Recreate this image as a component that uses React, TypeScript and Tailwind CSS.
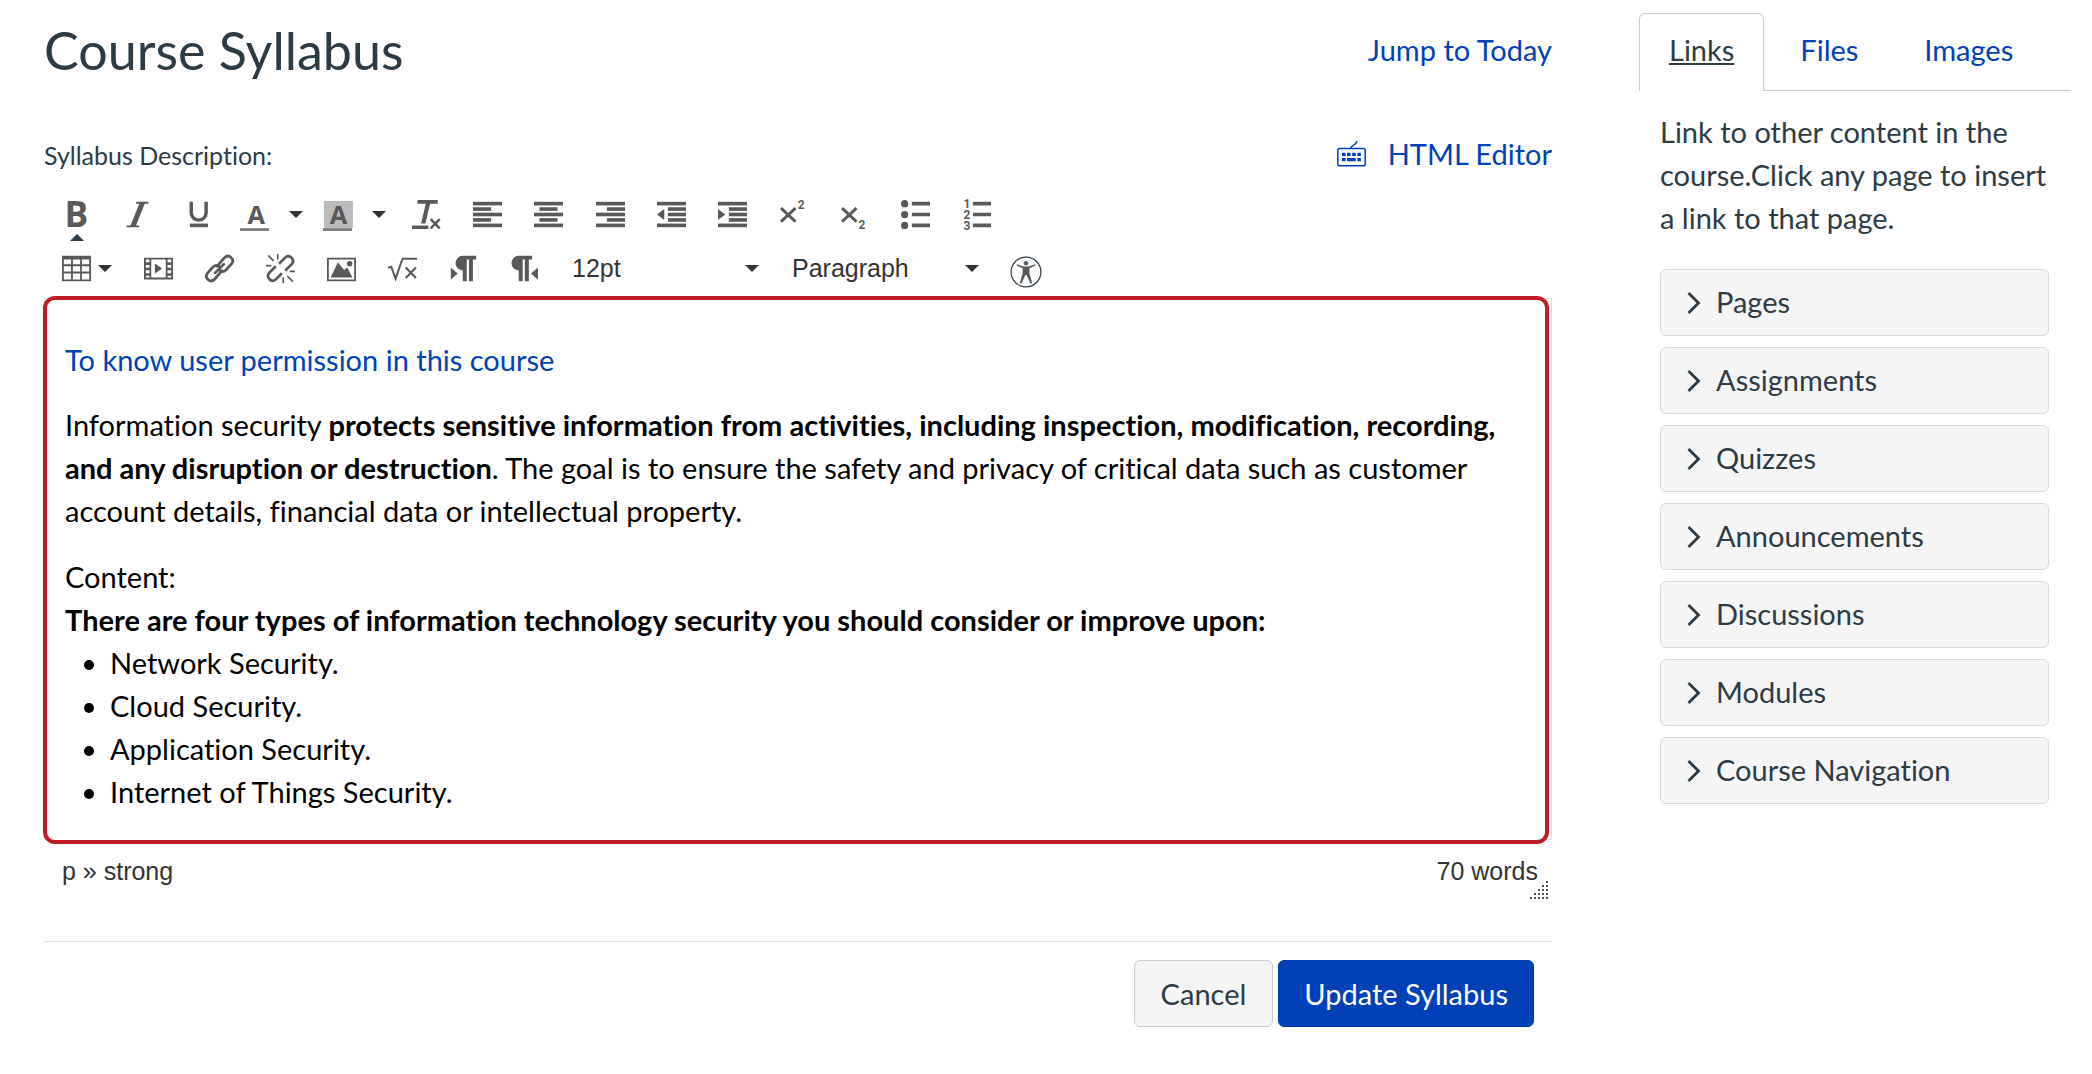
import React from 'react';
import type { ReactNode } from 'react';

const Icon = ({ children }: { children: ReactNode }) => (
  <svg width="29" height="29" viewBox="0 0 16 16" fill="currentColor" className="shrink-0 overflow-visible" aria-hidden="true">
    {children}
  </svg>
);

const Caret = ({ className = '' }: { className?: string }) => (
  <svg width="14" height="7" viewBox="0 0 14 7" className={`pointer-events-none shrink-0 text-[#333333] ${className}`} aria-hidden="true">
    <path d="M0 0h14L7 7z" fill="currentColor" />
  </svg>
);

const Tool = ({ label, children }: { label: string; children: ReactNode }) => (
  <button type="button" aria-label={label} title={label} className="relative flex h-[54px] w-[61px] shrink-0 items-center justify-center">
    {children}
  </button>
);

const SplitTool = ({ label, children, tight }: { label: string; children: ReactNode; tight?: boolean }) => (
  <button
    type="button"
    aria-label={label}
    title={label}
    className={`flex h-[54px] shrink-0 items-center ${tight ? 'w-[82px] gap-[7px] pl-4' : 'w-[83px] gap-5 pl-[11px]'}`}
  >
    {children}
    <Caret />
  </button>
);

const Group = ({ children }: { children: ReactNode }) => <div className="flex">{children}</div>;

const bars = (rows: [number, number][]) =>
  rows.map(([x, w], i) => <rect key={i} x={x} y={1 + i * 3} width={w} height="2" />);

const ToolSelect = ({ label, value, options }: { label: string; value: string; options: string[] }) => (
  <div className="relative flex h-[54px] w-[220px] shrink-0 items-center">
    <select
      aria-label={label}
      defaultValue={value}
      className="h-full w-full appearance-none bg-transparent px-[17px] font-['Liberation_Sans',sans-serif] text-[25px] text-[#333333]"
    >
      {options.map((o) => (
        <option key={o}>{o}</option>
      ))}
    </select>
    <Caret className="absolute right-4" />
  </div>
);

const linkHalf = 'M6.6 6.8 L10.6 2.2 Q12.4 .2 14.2 1.8 Q16.2 3.6 14.6 5.5 L11.6 8.8 Q9.9 10.4 8.2 9.2';

const sections = ['Pages', 'Assignments', 'Quizzes', 'Announcements', 'Discussions', 'Modules', 'Course Navigation'];
const items = ['Network Security.', 'Cloud Security.', 'Application Security.', 'Internet of Things Security.'];

const Pilcrow = ({ x }: { x: number }) => (
  <path transform={`translate(${x} 0)`} d="M4 1h7.4v2H9.6v12H7.4V3H6.2v12H4V9a4 4 0 0 1 0-8z" />
);

function Toolbar() {
  return (
    <div role="toolbar" aria-label="Formatting" className="flex flex-col pl-[2px] text-[#595959]">
      <div className="flex flex-wrap gap-px">
        <Group>
          <Tool label="Bold">
            <Icon>
              <text x="7.9" y="15" textAnchor="middle" fontFamily="Open Sans" fontWeight="700" fontSize="19.5">B</text>
            </Icon>
            <svg width="14" height="7" viewBox="0 0 14 7" className="absolute bottom-0 text-[#2d3b45]" aria-hidden="true">
              <path d="M0 7h14L7 0z" fill="currentColor" />
            </svg>
          </Tool>
          <Tool label="Italic">
            <Icon>
              <path d="M7.2 1.5H14M2 14.5h7" stroke="currentColor" strokeWidth="1" fill="none" />
              <path d="M9.2 1.5h3L7 14.5H4z" />
            </Icon>
          </Tool>
          <Tool label="Underline">
            <Icon>
              <path d="M4 1v6a4.1 4.1 0 0 0 8.2 0V1" fill="none" stroke="currentColor" strokeWidth="1.9" />
              <rect x="3.2" y="13" width="10" height="2" />
            </Icon>
          </Tool>
          <SplitTool label="Text color">
            <Icon>
              <text x="9" y="13" textAnchor="middle" fontFamily="Open Sans" fontWeight="700" fontSize="14">A</text>
              <rect x="0" y="15.5" width="16" height="1.6" fill="#808080" />
            </Icon>
          </SplitTool>
          <SplitTool label="Background color">
            <Icon>
              <rect x="0.5" y="0.5" width="16" height="15" fill="#bbbbbb" />
              <text x="8.5" y="13" textAnchor="middle" fontFamily="Open Sans" fontWeight="700" fontSize="14">A</text>
              <rect x="0" y="15.5" width="16" height="1.6" fill="#808080" />
            </Icon>
          </SplitTool>
        </Group>
        <Group>
          <Tool label="Clear formatting">
            <Icon>
              <path d="M3 0h11.2v2.1H10L7.4 13H5L7.6 2.1H3zM0 14h9v2H0z" />
              <path d="M10.3 10.6l5 5M15.3 10.6l-5 5" stroke="currentColor" strokeWidth="1.4" />
            </Icon>
          </Tool>
          <Tool label="Align left"><Icon>{bars([[0, 16], [0, 10], [0, 16], [0, 10], [0, 16]])}</Icon></Tool>
          <Tool label="Align center"><Icon>{bars([[0, 16], [3, 10], [0, 16], [3, 10], [0, 16]])}</Icon></Tool>
        </Group>
        <Group>
          <Tool label="Align right"><Icon>{bars([[0, 16], [6, 10], [0, 16], [6, 10], [0, 16]])}</Icon></Tool>
          <Tool label="Decrease indent">
            <Icon>{bars([[0, 16], [6, 10], [6, 10], [6, 10], [0, 16]])}<path d="M4 5v6L0 8z" /></Icon>
          </Tool>
          <Tool label="Increase indent">
            <Icon>{bars([[0, 16], [6, 10], [6, 10], [6, 10], [0, 16]])}<path d="M0 5v6l4-3z" /></Icon>
          </Tool>
          <Tool label="Superscript">
            <Icon>
              <path d="M1.1 4.5l8 7.4M9.1 4.5l-8 7.4" stroke="currentColor" strokeWidth="1.6" />
              <text x="10.4" y="4.8" fontFamily="Roboto" fontWeight="700" fontSize="6.6">2</text>
            </Icon>
          </Tool>
          <Tool label="Subscript">
            <Icon>
              <path d="M1.1 4.5l8 7.4M9.1 4.5l-8 7.4" stroke="currentColor" strokeWidth="1.6" />
              <text x="10.2" y="16" fontFamily="Roboto" fontWeight="700" fontSize="6.6">2</text>
            </Icon>
          </Tool>
          <Tool label="Bulleted list">
            <Icon>
              <circle cx="2" cy="2" r="2" /><circle cx="2" cy="8" r="2" /><circle cx="2" cy="14" r="2" />
              <path d="M6 1h10v2H6zM6 7h10v2H6zM6 13h10v2H6z" />
            </Icon>
          </Tool>
          <Tool label="Numbered list">
            <Icon>
              <g fontFamily="Roboto" fontWeight="700" fontSize="6.6">
                <text x="0.8" y="4.4">1</text><text x="0.8" y="10.4">2</text><text x="0.8" y="16.4">3</text>
              </g>
              <path d="M6 1h10v2H6zM6 7h10v2H6zM6 13h10v2H6z" />
            </Icon>
          </Tool>
        </Group>
      </div>
      <div className="flex flex-wrap">
        <SplitTool label="Table" tight>
          <Icon>
            <path fillRule="evenodd" d="M0 1h16v14H0zM1 3v2.7h4V3zM6 3v2.7h4V3zM11 3v2.7h4V3zM1 6.7v3h4v-3zM6 6.7v3h4v-3zM11 6.7v3h4v-3zM1 10.7V14h4v-3.3zM6 10.7V14h4v-3.3zM11 10.7V14h4v-3.3z" />
          </Icon>
        </SplitTool>
        <Tool label="Media">
          <Icon>
            <path fillRule="evenodd" d="M0 2h16v12H0zM1 3v1.6h2V3zM1 6v1.6h2V6zM1 9v1.6h2V9zM1 12v1h2v-1zM4 3v10h8V3zM13 3v1.6h2V3zM13 6v1.6h2V6zM13 9v1.6h2V9zM13 12v1h2v-1z" />
            <path d="M6 5.2v5.6L10 8z" />
          </Icon>
        </Tool>
        <Tool label="Insert link">
          <Icon>
            <g fill="none" stroke="currentColor" strokeWidth="1.5" strokeLinecap="round">
              <path d={linkHalf} />
              <path d={linkHalf} transform="rotate(180 8 8)" />
              <path d="M5.6 10.4l4.8-4.8" />
            </g>
          </Icon>
        </Tool>
        <Tool label="Remove link">
          <Icon>
            <g fill="none" stroke="currentColor" strokeWidth="1.5">
              <path d="M7.2 5.4l3.4-3.4Q12.2.4 14 2q1.8 1.8.2 3.6L10.6 9.2" />
              <path d="M8.8 10.6l-3.4 3.4Q3.8 15.6 2 14q-1.8-1.8-.2-3.6L5.4 6.8" />
              <path d="M6.5 0v3M1.2.8l3 3M0 6.4h3M9.5 13v3M11.8 12.2l3 3M13 9.6h3" strokeWidth="0.9" />
            </g>
          </Icon>
        </Tool>
        <Tool label="Insert image">
          <Icon>
            <path fillRule="evenodd" d="M0 2h16v13H0zM1 3v11h14V3z" />
            <path d="M2 13l4-8.4 3.4 4.2 1.8-1.4L14 13z" />
            <circle cx="12.5" cy="5.4" r="1.5" />
          </Icon>
        </Tool>
        <Tool label="Insert equation">
          <Icon>
            <path d="M0 7.6l1.8-.6 2.4 6.6L8 2.6h8" fill="none" stroke="currentColor" strokeWidth="1.1" />
            <path d="M9.8 7.4l5.6 5.8M15.4 7.4l-5.6 5.8" stroke="currentColor" strokeWidth="1.2" />
          </Icon>
        </Tool>
        <Tool label="Left to right"><Icon><Pilcrow x={3.6} /><path d="M1 7.4v6.8l3.8-3.4z" /></Icon></Tool>
        <Tool label="Right to left"><Icon><Pilcrow x={0.8} /><path d="M15.4 7.4v6.8l-3.8-3.4z" /></Icon></Tool>
        <ToolSelect label="Font size" value="12pt" options={['8pt', '10pt', '12pt', '14pt', '18pt', '24pt', '36pt']} />
        <ToolSelect label="Block format" value="Paragraph" options={['Paragraph', 'Header 2', 'Header 3', 'Header 4', 'Preformatted']} />
        <button type="button" aria-label="Check accessibility" className="flex h-[54px] w-[61px] items-center justify-center pt-2">
          <svg width="32" height="32" viewBox="0 0 32 32" fill="currentColor" aria-hidden="true">
            <circle cx="16" cy="16" r="14.9" fill="none" stroke="#2d3b45" strokeWidth="1.2" />
            <circle cx="16" cy="7.3" r="2.2" />
            <path d="M7 8.2l6.2 2.2h5.6L25 8.2l.4 1.2-6 2.8v5l2.8 10-1.6.6L16.6 19h-1.2l-4 8.8-1.6-.6 2.8-10v-5l-6-2.8z" />
          </svg>
        </button>
      </div>
    </div>
  );
}

export default function App() {
  return (
    <div className="flex gap-[87px] pr-[21px] pl-11 font-[Lato,sans-serif] text-[29px] leading-[43px] text-[#2d3b45] [font-variant-ligatures:no-common-ligatures]">
      <main className="flex min-w-0 flex-1 flex-col">
        <header className="flex h-[102px] items-start justify-between pt-[11px]">
          <h1 className="text-[52px] leading-[78px]">Course Syllabus</h1>
          <a href="#today" className="pt-[17px] text-[#0041b8]">Jump to Today</a>
        </header>
        <div className="flex h-[85px] items-start justify-between pt-[30px]">
          <span className="pt-[2px] text-[25px]">Syllabus Description:</span>
          <a href="#html" className="flex items-center gap-[22px] text-[#0041b8]">
            <svg width="29" height="26" viewBox="0 0 29 26" fill="none" stroke="currentColor" strokeWidth="1.5" aria-hidden="true">
              <rect x="0.8" y="7.6" width="27.4" height="17.2" rx="1.8" />
              <path d="M14 7.5c0-4 5-2.5 6-7.5" />
              <path d="M5 13.3h3.6M10 13.3h3.6M15.2 13.3h3.6M20.3 13.3h3.6M5 18.6h3.6M10 18.6h8.8M20.3 18.6h3.6" strokeWidth="3.2" />
            </svg>
            HTML Editor
          </a>
        </div>
        <Toolbar />
        <div className="mt-[3px] border border-[#dddddd]">
          <div className="-mt-[3px] mr-[2px] -mb-[5px] -ml-[2px] rounded-xl border-4 border-[#c01c28] bg-white px-[18px] pt-[38px] pb-[27px] text-black">
            <p><a href="#permission" className="text-[#0041b8]">To know user permission in this course</a></p>
            <p className="mt-[22px]">
              Information security{' '}
              <strong>protects sensitive information from activities, including inspection, modification, recording, and any disruption or destruction</strong>
              . The goal is to ensure the safety and privacy of critical data such as customer account details, financial data or intellectual property.
            </p>
            <p className="mt-[23px]">
              Content:
              <br />
              <strong>There are four types of information technology security you should consider or improve upon:</strong>
            </p>
            <ul className="list-disc pl-[45px]">
              {items.map((t) => <li key={t}>{t}</li>)}
            </ul>
          </div>
        </div>
        <div className="relative flex h-[101px] items-start justify-between pt-[10px] pr-[14px] pl-[18px] font-['Liberation_Sans',sans-serif] text-[25px] text-[#333333]">
          <span>p » strong</span>
          <span>70 words</span>
          <svg width="18" height="18" viewBox="0 0 18 18" className="absolute top-[41px] right-1" fill="#555555" aria-hidden="true">
            {[0, 1, 2, 3, 4].flatMap((r) =>
              Array.from({ length: r + 1 }, (_, c) => (
                <rect key={`${r}-${c}`} x={16 - c * 4} y={r * 4} width="2" height="2" />
              )),
            )}
          </svg>
        </div>
        <div className="flex justify-end gap-[5px] border-t border-[#e0e0e0] pt-[18px] pr-[18px]">
          <button type="button" className="h-[67px] rounded-md border border-[#c7cdd1] bg-[#f5f5f5] px-[26px] pb-px">Cancel</button>
          <button type="button" className="h-[67px] rounded-md border border-[#003da8] bg-[#0041b8] px-[25px] pb-px text-white">Update Syllabus</button>
        </div>
      </main>
      <aside className="w-[432px] shrink-0 pt-[13px]">
        <div role="tablist" className="flex border-b border-[#c7cdd1]">
          <button type="button" role="tab" aria-selected="true" className="-mb-px h-[78px] rounded-t-md border border-b-0 border-[#c7cdd1] bg-white px-[29px] pb-[6px] underline">Links</button>
          <button type="button" role="tab" aria-selected="false" className="px-9 pb-[5px] text-[#0041b8]">Files</button>
          <button type="button" role="tab" aria-selected="false" className="px-[30px] pb-[5px] text-[#0041b8]">Images</button>
        </div>
        <div role="tabpanel" className="pt-[19px] pr-[22px] pl-[21px]">
          <p>Link to other content in the course.Click any page to insert a link to that page.</p>
          <div className="mt-[30px] flex flex-col gap-[11px]">
            {sections.map((s) => (
              <button key={s} type="button" aria-expanded="false" className="flex h-[67px] items-center gap-[15px] rounded-md border border-[#d9d9d9] bg-[#f5f5f5] pl-[26px]">
                <svg width="14" height="22" viewBox="0 0 14 22" fill="none" stroke="currentColor" strokeWidth="2.8" aria-hidden="true">
                  <path d="M1.5 1l10 10-10 10" />
                </svg>
                <span className="pb-[2px]">{s}</span>
              </button>
            ))}
          </div>
        </div>
      </aside>
    </div>
  );
}
